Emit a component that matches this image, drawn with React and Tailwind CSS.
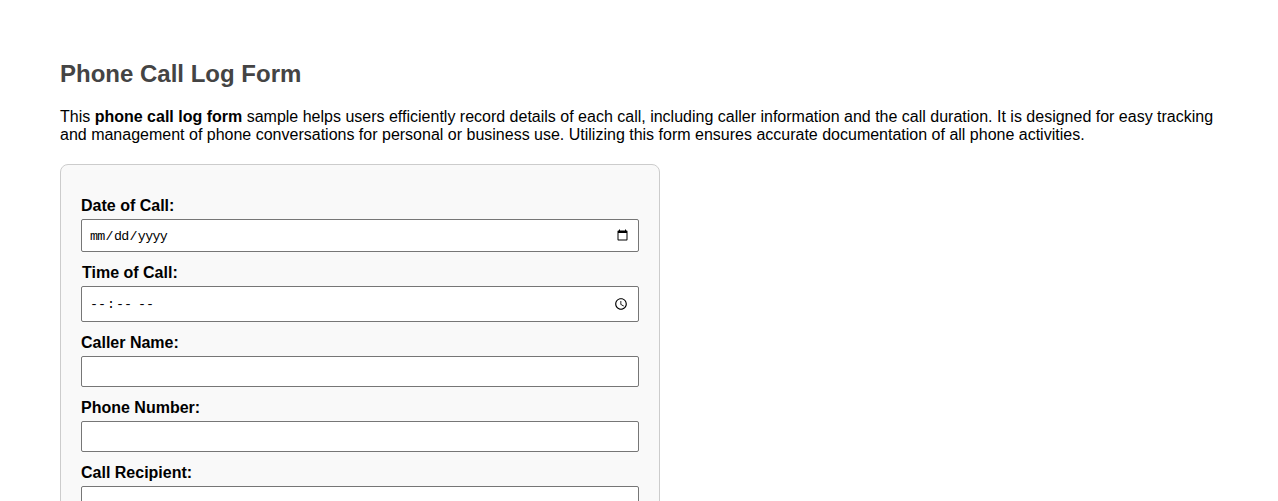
export default function App() {
    const labelClass = "block text-[16px] leading-[18px] font-bold";
    const inputClass = "block mt-[4px] w-[558px] bg-white border border-[#767676] rounded-[2px] text-[13.333px] leading-[15px] text-black outline-none";
    const pickerClass = "font-['Liberation_Mono',monospace] pl-[7px] pr-[7px] [&::-webkit-datetime-edit]:pt-[2px]";

    return (
        <div className="h-[501px] overflow-hidden bg-white font-['Liberation_Sans',Arial,sans-serif] text-black">
            <div className="px-[60px] pt-[60px]">
                <h1 className="text-[24px] leading-[27px] font-bold text-[#444444]">Phone Call Log Form</h1>

                <p className="mt-[21px] w-[1158px] text-[16px] leading-[18px]">
                    This <strong className="font-bold">phone call log form</strong> sample helps users efficiently record details of each call, including caller information and the call duration. It is designed for easy tracking and management of phone conversations for personal or business use. Utilizing this form ensures accurate documentation of all phone activities.
                </p>

                <form className="mt-[20px] w-[600px] h-[400px] bg-[#f9f9f9] border border-[#cccccc] rounded-[8px] pt-[32px] pl-[20px]">
                    <label className={labelClass}>Date of Call:</label>
                    <input type="date" className={`${inputClass} ${pickerClass} h-[33px] tracking-[-0.7px]`} />

                    <label className={`${labelClass} mt-[12px] ml-[1px]`}>Time of Call:</label>
                    <input type="time" className={`${inputClass} ${pickerClass} h-[36px]`} />

                    <label className={`${labelClass} mt-[12px]`}>Caller Name:</label>
                    <input type="text" className={`${inputClass} h-[31px] px-[8px]`} />

                    <label className={`${labelClass} mt-[12px]`}>Phone Number:</label>
                    <input type="text" className={`${inputClass} h-[31px] px-[8px]`} />

                    <label className={`${labelClass} mt-[12px]`}>Call Recipient:</label>
                    <input type="text" className={`${inputClass} h-[31px] px-[8px]`} />
                </form>
            </div>
        </div>
    );
}
